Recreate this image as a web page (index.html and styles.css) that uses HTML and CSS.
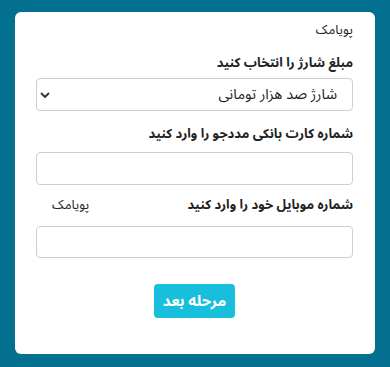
FILE: index.html
```html
<!DOCTYPE html>
<html lang="fa" dir="rtl">
<head>
    <meta charset="UTF-8">
    <meta name="viewport" content="width=device-width, initial-scale=1.0">
    <title>پویامک</title>
    <link rel="stylesheet" href="styles.css">
</head>
<body>
    <div class="card">
        <div class="brand">پویامک</div>

        <label class="field-label" for="amount">مبلغ شارژ را انتخاب کنید</label>
        <div class="select-wrap">
            <select id="amount" class="control">
                <option>شارژ صد هزار تومانی</option>
            </select>
            <svg class="chevron" width="10" height="7" viewBox="0 0 10 7">
                <path d="M1.5 1.5 L5 5 L8.5 1.5" fill="none" stroke="#333" stroke-width="1.8" stroke-linecap="round" stroke-linejoin="round"/>
            </svg>
        </div>

        <label class="field-label" for="card">شماره کارت بانکی مددجو را وارد کنید</label>
        <input id="card" class="control" type="text">

        <div class="label-row">
            <label class="field-label" for="mobile">شماره موبایل خود را وارد کنید</label>
            <span class="brand-small">پویامک</span>
        </div>
        <input id="mobile" class="control short" type="text">

        <div class="actions">
            <button type="button">مرحله بعد</button>
        </div>
    </div>
</body>
</html>
```

FILE: styles.css
```css
body {
    margin: 0;
    background-color: #04708f;
    font-family: "Noto Sans Arabic", "DejaVu Sans", sans-serif;
    color: #222;
}
.card {
    box-sizing: border-box;
    width: 360px;
    height: 342px;
    margin: 12px 15px;
    padding: 8px 22px 0 21px;
    background-color: white;
    border-radius: 6px;
}
.brand {
    font-size: 13px;
    line-height: 20px;
}
.field-label {
    display: block;
    margin-top: 13px;
    font-size: 13px;
    font-weight: bold;
    line-height: 20px;
}
.select-wrap {
    position: relative;
    margin-top: 5px;
}
.control {
    display: block;
    box-sizing: border-box;
    width: 100%;
    height: 33px;
    border: 1px solid #cfcfcf;
    border-radius: 4px;
    background-color: white;
    font-family: inherit;
    font-size: 14.5px;
    color: #222;
}
select.control {
    margin: 0;
    padding: 0 15px 0 30px;
    -webkit-appearance: none;
    appearance: none;
}
.chevron {
    position: absolute;
    left: 4px;
    top: 14px;
}
input.control {
    margin-top: 8px;
    padding: 0 10px;
}
.label-row {
    display: flex;
    justify-content: space-between;
    align-items: center;
    margin-top: 10px;
}
.label-row .field-label {
    margin-top: 0;
}
.brand-small {
    padding-left: 16px;
    font-size: 13px;
    line-height: 20px;
}
input.control.short {
    margin-top: 11px;
    height: 32px;
}
.actions {
    margin-top: 26px;
    text-align: center;
}
button {
    height: 34px;
    padding: 0 9px;
    border: none;
    border-radius: 4px;
    background-color: #17bfdc;
    color: white;
    font-family: inherit;
    font-size: 15px;
    font-weight: bold;
}
```
